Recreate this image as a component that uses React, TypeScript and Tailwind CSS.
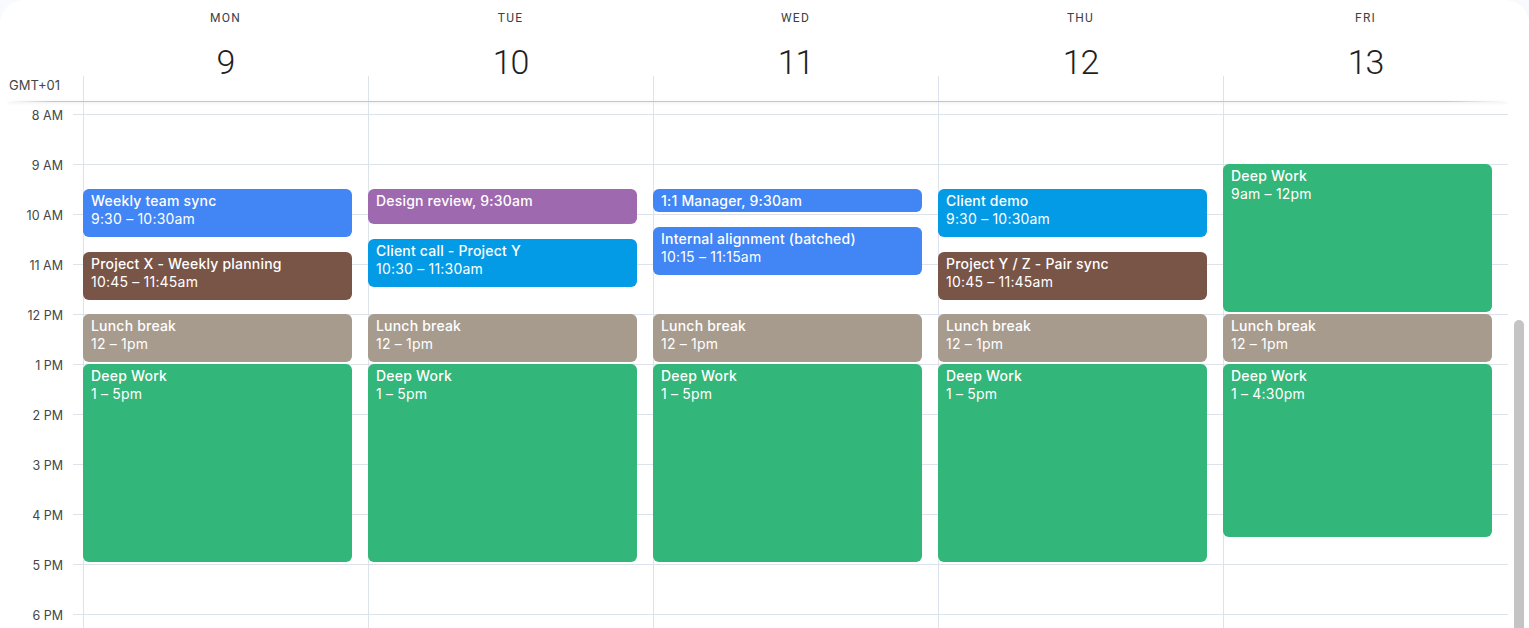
import React from 'react';

type CalEvent = {
  day: number;
  top: number;
  height: number;
  title: string;
  time?: string;
  color: string;
};

const days = [
  { name: 'MON', date: 9 },
  { name: 'TUE', date: 10 },
  { name: 'WED', date: 11 },
  { name: 'THU', date: 12 },
  { name: 'FRI', date: 13 },
];

const hours = ['8 AM', '9 AM', '10 AM', '11 AM', '12 PM', '1 PM', '2 PM', '3 PM', '4 PM', '5 PM', '6 PM'];

// top/height in px from the 8 AM line, 50px per hour
const events: CalEvent[] = [
  { day: 0, top: 75, height: 48, title: 'Weekly team sync', time: '9:30 – 10:30am', color: 'bg-[#4285f4]' },
  { day: 0, top: 137.5, height: 48, title: 'Project X - Weekly planning', time: '10:45 – 11:45am', color: 'bg-[#795548]' },
  { day: 0, top: 200, height: 48, title: 'Lunch break', time: '12 – 1pm', color: 'bg-[#a79b8e]' },
  { day: 0, top: 250, height: 198, title: 'Deep Work', time: '1 – 5pm', color: 'bg-[#33b679]' },

  { day: 1, top: 75, height: 35, title: 'Design review, 9:30am', color: 'bg-[#9e69af]' },
  { day: 1, top: 125, height: 48, title: 'Client call - Project Y', time: '10:30 – 11:30am', color: 'bg-[#039be5]' },
  { day: 1, top: 200, height: 48, title: 'Lunch break', time: '12 – 1pm', color: 'bg-[#a79b8e]' },
  { day: 1, top: 250, height: 198, title: 'Deep Work', time: '1 – 5pm', color: 'bg-[#33b679]' },

  { day: 2, top: 75, height: 23, title: '1:1 Manager, 9:30am', color: 'bg-[#4285f4]' },
  { day: 2, top: 112.5, height: 48, title: 'Internal alignment (batched)', time: '10:15 – 11:15am', color: 'bg-[#4285f4]' },
  { day: 2, top: 200, height: 48, title: 'Lunch break', time: '12 – 1pm', color: 'bg-[#a79b8e]' },
  { day: 2, top: 250, height: 198, title: 'Deep Work', time: '1 – 5pm', color: 'bg-[#33b679]' },

  { day: 3, top: 75, height: 48, title: 'Client demo', time: '9:30 – 10:30am', color: 'bg-[#039be5]' },
  { day: 3, top: 137.5, height: 48, title: 'Project Y / Z - Pair sync', time: '10:45 – 11:45am', color: 'bg-[#795548]' },
  { day: 3, top: 200, height: 48, title: 'Lunch break', time: '12 – 1pm', color: 'bg-[#a79b8e]' },
  { day: 3, top: 250, height: 198, title: 'Deep Work', time: '1 – 5pm', color: 'bg-[#33b679]' },

  { day: 4, top: 50, height: 148, title: 'Deep Work', time: '9am – 12pm', color: 'bg-[#33b679]' },
  { day: 4, top: 200, height: 48, title: 'Lunch break', time: '12 – 1pm', color: 'bg-[#a79b8e]' },
  { day: 4, top: 250, height: 173, title: 'Deep Work', time: '1 – 4:30pm', color: 'bg-[#33b679]' },
];

function EventChip({ ev }: { ev: CalEvent }) {
  return (
    <div
      className={`absolute left-[-1px] right-[16px] rounded-[6px] px-2 pt-[3px] text-white text-[14px] leading-[18px] tracking-[0.2px] overflow-hidden ${ev.color}`}
      style={{ top: ev.top, height: ev.height }}
    >
      <div className="font-medium truncate">{ev.title}</div>
      {ev.time && <div>{ev.time}</div>}
    </div>
  );
}

export default function App() {
  return (
    <div className="h-screen overflow-hidden bg-[#f8fafd] font-['Inter','Roboto',sans-serif] text-[#1f1f1f]">
      <div className="relative h-full bg-white rounded-t-[24px] overflow-hidden">
        {/* header */}
        <div className="flex h-[101px]">
          <div className="w-[83px] shrink-0 flex flex-col justify-end pb-[6px]">
            <span className="pl-[9px] text-[13px] text-[#444746]">GMT+01</span>
          </div>
          {days.map((d) => (
            <div key={d.name} className="w-[285px] shrink-0 flex flex-col">
              <div className="h-[76px] flex flex-col items-center">
                <span className="mt-[10px] text-[12px] leading-[16px] tracking-[1.2px] text-[#3c4043] font-['Roboto',sans-serif]">
                  {d.name}
                </span>
                <span className="mt-[16px] text-[34px] leading-[40px] font-light tracking-[-1px] text-[#1f1f1f] font-['Roboto',sans-serif]">
                  {d.date}
                </span>
              </div>
              <div className="flex-1 border-l border-[#dde3ea]" />
            </div>
          ))}
        </div>
        <div className="mx-[8px] mr-[22px] h-px bg-[linear-gradient(to_right,transparent,#c4c7c5_3%,#c4c7c5_96%,transparent)] shadow-[0_1px_3px_rgba(0,0,0,0.12)]" />

        {/* body */}
        <div className="flex">
          <div className="w-[83px] shrink-0 pt-[12px]">
            {hours.map((h) => (
              <div key={h} className="relative h-[50px]">
                <span className="absolute right-[20px] top-[-6px] text-[12.5px] leading-[16px] text-[#444746]">
                  {h}
                </span>
                <div className="absolute right-0 top-0 w-[10px] h-px bg-[#dde3ea]" />
              </div>
            ))}
          </div>
          {days.map((d, i) => (
            <div key={d.name} className="w-[285px] shrink-0 border-l border-[#dde3ea] pt-[12px]">
              <div className="relative">
                {hours.map((h) => (
                  <div key={h} className="h-[50px] border-t border-[#dde3ea]" />
                ))}
                {events
                  .filter((ev) => ev.day === i)
                  .map((ev) => (
                    <EventChip key={ev.title + ev.top} ev={ev} />
                  ))}
              </div>
            </div>
          ))}
        </div>

        {/* scrollbar thumb */}
        <div className="absolute left-[1514px] top-[320px] w-[10px] h-[340px] rounded-full bg-[#c4c4c4]" />
      </div>
    </div>
  );
}
